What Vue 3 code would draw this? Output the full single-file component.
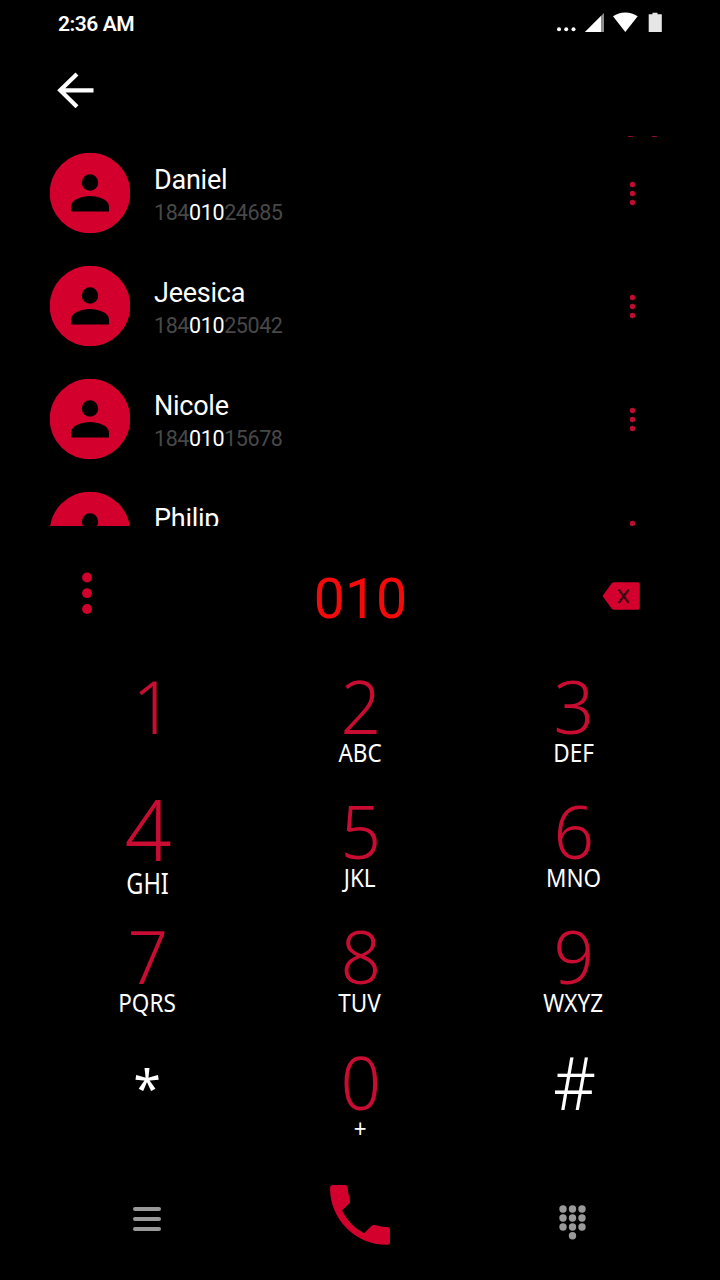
<template>
  <div class="phone">
    <header class="status">
      <span class="time">2:36 AM</span>
      <svg class="status-icons" viewBox="0 0 110 24" width="110" height="24">
        <circle cx="7" cy="19.3" r="2" />
        <circle cx="14.2" cy="19.3" r="2" />
        <circle cx="21.5" cy="19.3" r="2" />
        <path d="M33 22 52 3v19z" fill="#8c8c8c" />
        <path d="M33 22 49 6v16z" />
        <path d="M73.3 22 61 6.3Q66.3 2.5 73.3 2.5T85.7 6.3z" />
        <path d="M96.7 4.2H100.500V2.800h5v1.400h4.300V22H96.700z" fill="#e6e6e6" />
      </svg>
    </header>

    <nav class="toolbar">
      <button class="plain" aria-label="Back">
        <svg viewBox="0 0 40 40" width="40" height="40">
          <path d="M37.5 20.3H4M21 3.900 4.200 20.300 21 36.700" fill="none" stroke="#fff" stroke-width="4.2" />
        </svg>
      </button>
    </nav>

    <div class="edge"><i></i><i></i></div>

    <ul class="contacts">
      <li v-for="c in contacts" :key="c.name" class="contact">
        <svg class="avatar" viewBox="0 0 80 80" width="80" height="80">
          <circle cx="40" cy="40" r="40.3" fill="#d3002d" />
          <circle cx="40" cy="29.5" r="8.2" />
          <path d="M21 58.5v-5C21 46.5 32 43 40 43s19 3.5 19 10.5v5z" />
        </svg>
        <div class="info">
          <div class="name">{{ c.name }}</div>
          <div class="number">{{ c.before }}<b>{{ typed }}</b>{{ c.after }}</div>
        </div>
        <svg class="more" viewBox="0 0 8 26" width="8" height="26">
          <circle v-for="y in [3.5, 12.5, 21.5]" :key="y" cx="4.5" :cy="y" r="2.7" fill="#c00c2e" />
        </svg>
      </li>
    </ul>

    <section class="entry">
      <svg viewBox="0 0 12 44" width="12" height="44">
        <circle v-for="y in [6.5, 22.2, 38]" :key="y" cx="6" :cy="y" r="4.9" fill="#d3002d" />
      </svg>
      <span class="typed">{{ typed }}</span>
      <button class="plain erase" aria-label="Delete">
        <svg viewBox="0 0 38 28" width="38" height="28">
          <path d="M.5 14 9.5 1.6Q10.6.2 12.5.2H35Q37.8.2 37.8 3V25Q37.8 27.8 35 27.8H12.5Q10.6 27.8 9.5 26.4z" fill="#d3002d" />
          <path d="M16.7 7.5 26.7 21M26.7 7.5 16.7 21" fill="none" stroke="#3c0512" stroke-width="2.2" />
        </svg>
      </button>
    </section>

    <section class="pad">
      <button
        v-for="k in keys"
        :key="k.digit"
        class="plain key"
        :class="{ one: k.digit === '1', pressed: k.digit === '4', star: k.digit === '*', hash: k.digit === '#' }"
      >
        <span class="digit">{{ k.digit }}</span>
        <span v-if="k.letters" class="letters">{{ k.letters }}</span>
      </button>
    </section>

    <footer class="actions">
      <svg viewBox="0 0 28 26" width="28" height="26">
        <path d="M2 3h24M2 13h24M2 23h24" stroke="#9a9a9a" stroke-width="4" stroke-linecap="round" />
      </svg>
      <svg class="call" viewBox="0 0 60 60" width="60" height="60">
        <path
          d="M3 0H15Q17.5 0 17.7 3Q18 9 20 15Q20.5 17 19 18.5L12 25.5Q19.5 40.5 34 48.3L41.5 41Q43 39.5 45 40Q50.5 41.8 57 42Q60 42.2 60 45V57Q60 59.8 57 59.8C26 60 0 35 0 3Q0 0 3 0z"
          fill="#d3002d"
        />
      </svg>
      <svg class="dots" viewBox="0 0 28 36" width="28" height="36">
        <circle v-for="d in dots" :key="d.join()" :cx="d[0]" :cy="d[1]" r="3.7" fill="#9a9a9a" />
      </svg>
    </footer>
  </div>
</template>

<script setup>
import { ref } from 'vue';

const typed = ref('010');

const contacts = [
  { name: 'Daniel', before: '184', after: '24685' },
  { name: 'Jeesica', before: '184', after: '25042' },
  { name: 'Nicole', before: '184', after: '15678' },
  { name: 'Philip', before: '184', after: '' }
];

const keys = [
  { digit: '1', letters: '' },
  { digit: '2', letters: 'ABC' },
  { digit: '3', letters: 'DEF' },
  { digit: '4', letters: 'GHI' },
  { digit: '5', letters: 'JKL' },
  { digit: '6', letters: 'MNO' },
  { digit: '7', letters: 'PQRS' },
  { digit: '8', letters: 'TUV' },
  { digit: '9', letters: 'WXYZ' },
  { digit: '*', letters: '' },
  { digit: '0', letters: '+' },
  { digit: '#', letters: '' }
];

const dots = [
  [4, 5], [13.5, 5], [23, 5],
  [4, 14], [13.5, 14], [23, 14],
  [4, 23], [13.5, 23], [23, 23],
  [13.5, 31.7]
];
</script>

<style>
body {
  background: #000;
}
</style>

<style scoped>
.phone {
  display: flex;
  flex-direction: column;
  width: 720px;
  height: 1280px;
  overflow: hidden;
  background: #000;
  color: #fff;
  font-family: Roboto, sans-serif;
}

.plain {
  padding: 0;
  border: 0;
  background: none;
  color: inherit;
  font: inherit;
}

svg {
  display: block;
  flex: none;
}

.status {
  display: flex;
  justify-content: space-between;
  height: 46px;
  padding: 10px 58px 0 58px;
  box-sizing: border-box;
}

.time {
  font-size: 21px;
  font-weight: 600;
  letter-spacing: -0.45px;
  line-height: 28px;
}

.status-icons {
  fill: #fff;
}

.toolbar {
  height: 89px;
  padding: 24px 56px 0;
  box-sizing: border-box;
}

.edge {
  display: flex;
  align-items: flex-end;
  justify-content: flex-end;
  gap: 19px;
  height: 2px;
  padding-right: 63px;
}

.edge i {
  width: 5px;
  height: 1px;
  background: #8c1030;
}

.contacts {
  height: 389px;
  margin: 0;
  padding: 0;
  overflow: hidden;
  list-style: none;
}

.contact {
  display: flex;
  align-items: center;
  height: 111px;
  padding: 0 84px 2px 50px;
}

.more {
  margin-top: 3px;
}

.info {
  flex: 1;
  padding: 7px 0 0 24px;
}

.name {
  font-size: 27px;
  letter-spacing: -0.25px;
  line-height: 33px;
}

.number {
  font-size: 21.5px;
  letter-spacing: -0.4px;
  line-height: 32px;
  color: #484848;
}

.number b {
  font-weight: 400;
  color: #fff;
}

.entry {
  display: grid;
  grid-template-columns: 1fr 1fr 1fr;
  align-items: center;
  height: 134px;
  padding: 0 80px 0 81px;
}

.typed {
  padding-top: 13px;
  font-size: 55.5px;
  text-align: center;
  color: #f30a0a;
}

.erase {
  justify-self: end;
  padding-top: 6px;
}

.pad {
  display: grid;
  grid-template-columns: repeat(3, 1fr);
  grid-auto-rows: 125.2px;
  height: 502px;
  padding: 0 40px;
}

.key {
  display: flex;
  flex-direction: column;
  align-items: center;
  justify-content: flex-start;
  font-family: "Noto Sans", sans-serif;
}

.digit {
  height: 79px;
  padding-left: 2px;
  font-size: 73.5px;
  font-weight: 300;
  line-height: 91px;
  color: #c80c32;
  transform: scaleX(0.97);
}

.one .digit {
  padding-left: 12px;
}

.letters {
  font-size: 25px;
  line-height: 27px;
  transform: scaleX(0.9);
}

.pressed {
  transform: scale(1.15);
  transform-origin: 50% 60px;
}

.pressed .letters {
  padding: 1px 0 0 2px;
  transform: scaleX(0.82);
}

.star .digit {
  padding: 6px 0 0;
  font-size: 51px;
  font-weight: 400;
  color: #fff;
}

.hash .digit {
  color: #fff;
  transform: scaleX(0.9);
}

.actions {
  display: flex;
  align-items: center;
  justify-content: space-between;
  height: 113px;
  padding: 0 133px;
}

.call {
  margin-bottom: 8px;
}

.dots {
  margin-top: 6px;
}
</style>
